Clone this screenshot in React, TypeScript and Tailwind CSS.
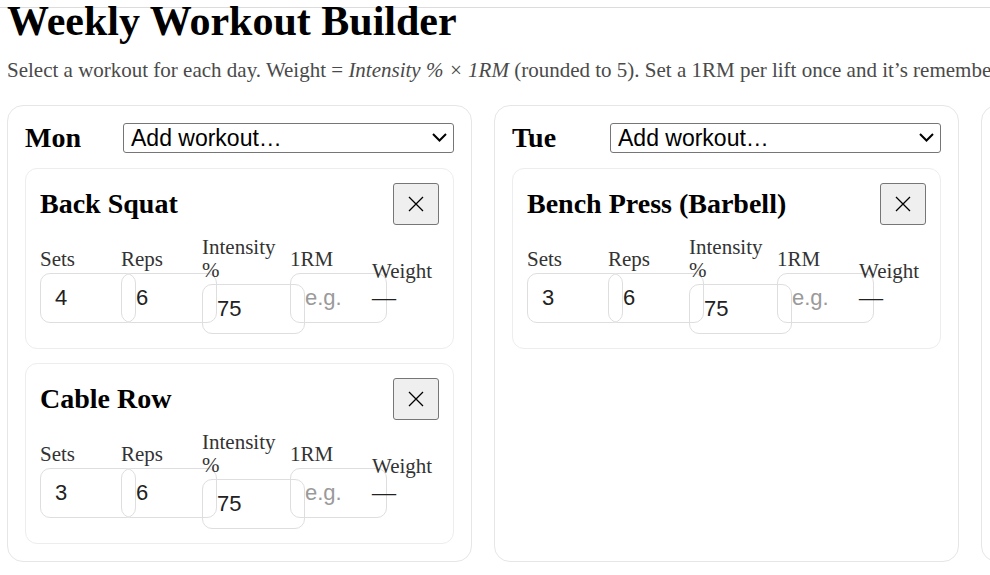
import React from 'react'

type Lift = { name: string; sets: number; reps: number; intensity: number }

const week: { day: string; lifts: Lift[] }[] = [
  {
    day: 'Mon',
    lifts: [
      { name: 'Back Squat', sets: 4, reps: 6, intensity: 75 },
      { name: 'Cable Row', sets: 3, reps: 6, intensity: 75 },
    ],
  },
  { day: 'Tue', lifts: [{ name: 'Bench Press (Barbell)', sets: 3, reps: 6, intensity: 75 }] },
  { day: 'Wed', lifts: [] },
]

const inputCls =
  "block h-[50px] w-[calc(100%+23px)] rounded-[10px] border border-[#dedede] bg-transparent px-[14px] font-['Liberation_Sans',sans-serif] text-[22px] text-[#222] placeholder:text-[#9a9a9a] outline-none"

export default function App() {
  return (
    <div className="h-[575px] w-[990px] overflow-hidden bg-white font-['Liberation_Serif',serif] text-black">
      <div className="h-2 border-b border-[#dcdcdc]" />
      <div className="px-[7px]">
        <h1 className="whitespace-nowrap text-[42px] font-bold leading-[26px]">Weekly Workout Builder</h1>
        <p className="mt-[25px] whitespace-nowrap text-[21px] leading-[23px] text-[#4a4a4a]">
          Select a workout for each day. Weight = <i>Intensity % × 1RM</i> (rounded to 5). Set a 1RM per lift
          once and it’s remembered.
        </p>

        <div className="mt-[23px] flex items-stretch gap-[22px]">
          {week.map((d) => (
            <DayCard key={d.day} day={d.day} lifts={d.lifts} />
          ))}
        </div>
      </div>
    </div>
  )
}

function DayCard({ day, lifts }: { day: string; lifts: Lift[] }) {
  return (
    <div className="flex w-[465px] shrink-0 flex-col gap-[14px] rounded-[16px] border border-[#e6e6e6] px-[17px] pb-[17px] pt-4">
      <div className="grid grid-cols-[90px_1fr] items-center gap-2">
        <h2 className="text-[28px] font-bold leading-[32px]">{day}</h2>
        <div className="relative">
          <select
            defaultValue=""
            className="block h-[30px] w-full appearance-none rounded-[3px] border border-[#767676] bg-white pl-[7px] font-['Liberation_Sans',sans-serif] text-[23px] leading-[26px] text-black"
          >
            <option value="">Add workout…</option>
            <option>Back Squat</option>
            <option>Bench Press (Barbell)</option>
            <option>Cable Row</option>
          </select>
          <svg
            className="pointer-events-none absolute right-[7px] top-[10px]"
            width="15"
            height="9"
            viewBox="0 0 15 9"
            fill="none"
          >
            <path d="M1 1l6.5 6.5L14 1" stroke="#000" strokeWidth="2" />
          </svg>
        </div>
      </div>
      {lifts.map((l) => (
        <LiftCard key={l.name} lift={l} />
      ))}
    </div>
  )
}

function LiftCard({ lift }: { lift: Lift }) {
  return (
    <div className="rounded-[12px] border border-[#ededed] p-[14px]">
      <div className="flex items-center justify-between">
        <h3 className="text-[28px] font-bold leading-[32px]">{lift.name}</h3>
        <button className="flex h-[42px] w-[46px] items-center justify-center rounded-[3px] border border-[#767676] bg-[#efefef]">
          <svg width="16" height="16" viewBox="0 0 16 16">
            <path d="M1 1l14 14M15 1L1 15" stroke="#000" strokeWidth="1.3" />
          </svg>
        </button>
      </div>
      <div className="mt-[11px] grid grid-cols-[73px_73px_80px_74px_1fr] items-center gap-x-2 text-[21px] leading-[23px] text-[#333]">
        <Field label="Sets" value={String(lift.sets)} />
        <Field label="Reps" value={String(lift.reps)} />
        <Field label="Intensity %" value={String(lift.intensity)} />
        <Field label="1RM" value="" placeholder="e.g." />
        <div>
          <div>Weight</div>
          <div className="text-[24px] leading-[28px] text-[#222]">—</div>
        </div>
      </div>
    </div>
  )
}

function Field({ label, value, placeholder }: { label: string; value: string; placeholder?: string }) {
  return (
    <label className="block">
      <span className="mb-[2px] block">{label}</span>
      <input type="text" defaultValue={value} placeholder={placeholder} className={inputCls} />
    </label>
  )
}
